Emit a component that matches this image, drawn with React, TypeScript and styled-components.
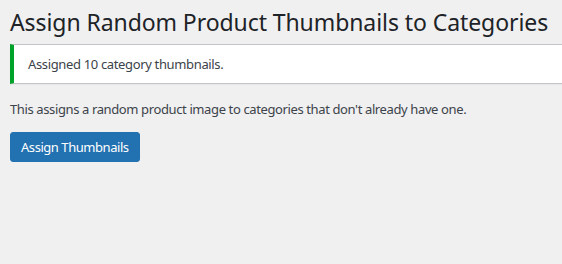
import React from 'react';
import styled, { createGlobalStyle } from 'styled-components';

const GlobalStyle = createGlobalStyle`
	html, body {
		margin: 0;
		padding: 0;
		background: #f0f0f1;
	}
	body {
		font-family: 'Noto Sans', 'Open Sans', sans-serif;
		color: #3c434a;
		font-size: 13px;
		overflow: hidden;
	}
`;

const Wrap = styled.div`
	display: flex;
	flex-direction: column;
	align-items: flex-start;
	padding: 0 0 0 10px;
	height: 264px;
`;

const Title = styled.h1`
	margin: 0;
	padding: 7px 0 6px;
	font-size: 23px;
	font-weight: 400;
	line-height: 30px;
	letter-spacing: -0.08px;
	color: #1d2327;
	white-space: nowrap;
`;

const Notice = styled.div`
	box-sizing: border-box;
	align-self: stretch;
	display: flex;
	align-items: center;
	height: 40px;
	margin-top: 1px;
	margin-right: -10px;
	padding: 0 14px;
	background: #fff;
	border: 1px solid #c3c4c7;
	border-left: 4px solid #00a32a;
	border-right: none;
	box-shadow: 0 1px 1px rgba(0, 0, 0, 0.04);
	color: #3c434a;
	font-size: 13px;
	letter-spacing: -0.35px;
`;

const Description = styled.p`
	margin: 16px 0 0;
	font-size: 13px;
	line-height: 19px;
	letter-spacing: -0.38px;
	color: #3c434a;
`;

const Button = styled.button`
	box-sizing: border-box;
	margin-top: 13px;
	height: 30px;
	padding: 0 10px;
	border: 1px solid #2271b1;
	border-radius: 3px;
	background: #2271b1;
	color: #fff;
	font-family: inherit;
	font-size: 13px;
	line-height: 28px;
	letter-spacing: -0.45px;
	white-space: nowrap;
	cursor: pointer;
`;

export default function App() {
	return (
		<>
			<GlobalStyle />
			<Wrap>
				<Title>Assign Random Product Thumbnails to Categories</Title>
				<Notice>Assigned 10 category thumbnails.</Notice>
				<Description>
					This assigns a random product image to categories that don't already have one.
				</Description>
				<Button type='button'>Assign Thumbnails</Button>
			</Wrap>
		</>
	);
}
